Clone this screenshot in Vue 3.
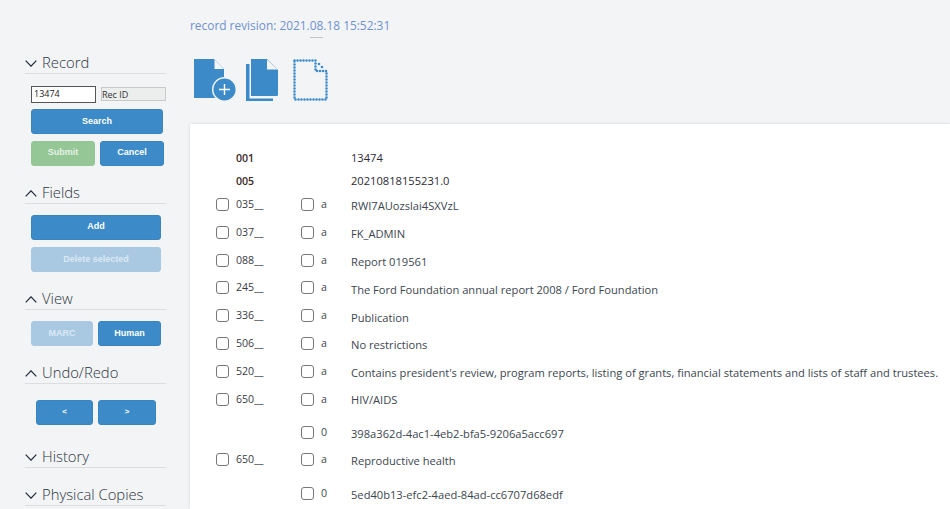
<script setup>
const rows = [
  { tag: '001', value: '13474', h: 23, plain: true },
  { tag: '005', value: '20210818155231.0', h: 25, plain: true },
  { tag: '035__', code: 'a', value: 'RWI7AUozslai4SXVzL', h: 28 },
  { tag: '037__', code: 'a', value: 'FK_ADMIN', h: 28 },
  { tag: '088__', code: 'a', value: 'Report 019561', h: 28 },
  { tag: '245__', code: 'a', value: 'The Ford Foundation annual report 2008 / Ford Foundation', h: 28, up: true },
  { tag: '336__', code: 'a', value: 'Publication', h: 27, up: true },
  { tag: '506__', code: 'a', value: 'No restrictions', h: 28 },
  { tag: '520__', code: 'a', value: "Contains president's review, program reports, listing of grants, financial statements and lists of staff and trustees.", h: 27 },
  { tag: '650__', code: 'a', value: 'HIV/AIDS', h: 34, down: true },
  { tag: '', code: '0', value: '398a362d-4ac1-4eb2-bfa5-9206a5acc697', h: 27 },
  { tag: '650__', code: 'a', value: 'Reproductive health', h: 34 },
  { tag: '', code: '0', value: '5ed40b13-efc2-4aed-84ad-cc6707d68edf', h: 28 },
];
</script>

<template>
  <div class="page">
    <aside class="side">
      <section class="sec sec-record">
        <h3 class="head"><svg class="chev" viewBox="0 0 12 7"><path d="M.7.7 6 6.2 11.3.7" /></svg>Record</h3>
        <div class="rec-row">
          <input class="rec-input" value="13474" />
          <span class="rec-label">Rec ID</span>
        </div>
        <button class="btn search">Search</button>
        <div class="pair">
          <button class="btn submit">Submit</button>
          <button class="btn cancel">Cancel</button>
        </div>
      </section>
      <section class="sec sec-fields">
        <h3 class="head"><svg class="chev" viewBox="0 0 12 7"><path d="M.7 6.3 6 .8l5.3 5.5" /></svg>Fields</h3>
        <button class="btn add">Add</button>
        <button class="btn add faded del">Delete selected</button>
      </section>
      <section class="sec sec-view">
        <h3 class="head"><svg class="chev" viewBox="0 0 12 7"><path d="M.7 6.3 6 .8l5.3 5.5" /></svg>View</h3>
        <div class="pair view-pair">
          <button class="btn faded marc">MARC</button>
          <button class="btn human">Human</button>
        </div>
      </section>
      <section class="sec sec-undo">
        <h3 class="head"><svg class="chev" viewBox="0 0 12 7"><path d="M.7 6.3 6 .8l5.3 5.5" /></svg>Undo/Redo</h3>
        <div class="pair undo-pair">
          <button class="btn arrow">&lt;</button>
          <button class="btn arrow">&gt;</button>
        </div>
      </section>
      <section class="sec sec-history">
        <h3 class="head"><svg class="chev" viewBox="0 0 12 7"><path d="M.7.7 6 6.2 11.3.7" /></svg>History</h3>
      </section>
      <section class="sec sec-copies">
        <h3 class="head"><svg class="chev" viewBox="0 0 12 7"><path d="M.7.7 6 6.2 11.3.7" /></svg>Physical Copies</h3>
      </section>
    </aside>

    <main class="main">
      <div class="revision">record revision: 2021.08.18 15:52:31</div>
      <div class="rule"></div>
      <div class="tools">
        <svg class="t-add" width="43" height="42" viewBox="0 0 43 42">
          <path d="M0 0h20l10 10v29H0z" fill="#3c8bc8" />
          <path d="M20.500 .500v9.500H30z" fill="#f3f4f6" />
          <circle cx="30.500" cy="30.500" r="11.800" fill="#3c8bc8" stroke="#f3f4f6" stroke-width="1.500" />
          <path d="M30.500 25v11M25 30.500h11" stroke="#fff" stroke-width="1.400" />
        </svg>
        <svg class="t-copy" width="33" height="42" viewBox="0 0 33 42">
          <path d="M5 0h16l11 11v24.500a1.500 1.500 0 0 1-1.500 1.500H5z" fill="#3c8bc8" />
          <path d="M21 .500v10h10.500z" fill="#f3f4f6" />
          <path d="M0 5h3.500v34.500H27V42H0z" fill="#3c8bc8" />
        </svg>
        <svg class="t-dots" width="35" height="42" viewBox="0 0 35 42">
          <path d="M1.500 1.500H22.500V12H33.500V40.500H1.500V1.500" fill="none" stroke="#3c8bc8" stroke-width="2.600" stroke-linecap="round" stroke-dasharray="0 3" />
          <circle cx="26" cy="5" r="1.300" fill="#3c8bc8" />
          <circle cx="29" cy="8" r="1.300" fill="#3c8bc8" />
        </svg>
      </div>
      <div class="card">
        <div v-for="(r, i) in rows" :key="i" class="row" :class="{ up: r.up, down: r.down }" :style="{ height: r.h + 'px' }">
          <span class="c1"><i v-if="r.tag && !r.plain" class="box"></i></span>
          <span class="c2" :class="{ plain: r.plain }">{{ r.tag }}</span>
          <span class="c3"><i v-if="r.code" class="box"></i></span>
          <span class="c4">{{ r.code }}</span>
          <span class="c5" :class="{ plainv: r.plain }">{{ r.value }}</span>
        </div>
      </div>
    </main>
  </div>
</template>

<style>
html, body { margin: 0; background: #f3f4f6; overflow: hidden; }
</style>

<style scoped>
.page { display: flex; width: 950px; height: 509px; overflow: hidden; background: #f3f4f6; }
.side { width: 190px; flex: none; padding-top: 53px; box-sizing: border-box; }
.sec { width: 141px; margin-left: 25px; }
.head {
  display: flex; align-items: center; height: 18px; padding-bottom: 2px; margin: 0;
  border-bottom: 1px solid #dcdddf;
  font: 300 14.800px "Open Sans", sans-serif; color: #2c3440;
}
.chev { width: 12px; height: 7px; margin-right: 5px; margin-top: 3px; fill: none; stroke: #1f2a3a; stroke-width: 1.200; flex: none; }
.btn {
  display: block; box-sizing: border-box; height: 25px; padding: 0 0 2px; border: 1px solid #3a85c0; border-radius: 3px;
  background: #3c8bc8; color: #fff; font: 700 9px "Liberation Sans", sans-serif; text-align: center;
}
.faded { background: #a9c9e3; border-color: #a9c9e3; color: #dbe8f3; }
.rec-row { display: flex; align-items: center; margin: 11px 0 0 6px; height: 18px; }
.rec-input {
  width: 65px; height: 17px; box-sizing: border-box; padding: 0 2px 1px; border: 1px solid #555; background: #fff;
  font: 9px "Open Sans", sans-serif; color: #222; outline: none;
}
.rec-label {
  width: 65px; height: 14px; margin-left: 5px; box-sizing: border-box; padding-left: 0; border: 1px solid #c9c9c9;
  background: #eceded; font: 9px/13px "Open Sans", sans-serif; color: #333;
}
.search { width: 132px; margin: 6px 0 0 6px; }
.pair { display: flex; }
.sec-record .pair { margin: 7px 0 0 6px; gap: 5px; }
.submit { width: 64px; background: #94c795; border-color: #94c795; color: #e6f2e6; padding-bottom: 3px; }
.cancel { width: 64px; padding-bottom: 3px; }
.sec-fields { margin-top: 17px; }
.add { width: 130px; margin: 11px 0 0 6px; padding-bottom: 4px; }
.del { margin-top: 7px; font-weight: 700; padding-bottom: 2px; }
.sec-view { margin-top: 17px; }
.view-pair { margin: 11px 0 0 6px; gap: 5px; }
.marc { width: 62px; }
.human { width: 63px; }
.sec-undo { margin-top: 17px; }
.undo-pair { margin: 16px 0 0 11px; gap: 5px; }
.arrow { width: 57px; font-size: 8px; }
.arrow + .arrow { width: 58px; }
.sec-history { margin-top: 22px; }
.sec-copies { margin-top: 17px; }

.main { flex: 1; min-width: 0; }
.revision { margin-top: 16px; height: 18px; font: 11.900px/18px "Open Sans", sans-serif; color: #6f92cf; }
.rule { width: 13px; height: 1px; margin: 3px 0 0 120px; background: #c4c6c9; }
.tools { display: flex; align-items: flex-start; margin: 21px 0 0 4px; }
.t-add { margin-right: 9px; }
.t-copy { margin-right: 14px; }
.card {
  box-sizing: border-box; height: 385px; margin-top: 23px; padding-top: 23px; background: #fff;
  box-shadow: 0 0 3px rgba(0, 0, 0, .12); overflow: hidden;
}
.row { display: flex; align-items: flex-start; font: 11.150px/22px "Open Sans", sans-serif; color: #3c4650; white-space: nowrap; }
.c1 { flex: none; padding-left: 26px; width: 20px; }
.c2 { width: 65px; flex: none; color: #3a3a44; line-height: 18px; font-size: 10.600px; }
.c2.plain { color: #3a2a28; font-weight: 600; line-height: 22px; }
.c3 { width: 20px; flex: none; }
.c4 { width: 30px; flex: none; line-height: 18px; font-size: 10.600px; }
.c5 { flex: none; }
.c5.plainv { color: #2e2a35; }
.box { display: block; width: 11px; height: 11px; margin-top: 3px; border: 1px solid #777; border-radius: 3px; background: #fff; }
.up .box { margin-top: 2px; }
.up .c2, .up .c4 { line-height: 16px; }
.down .box { margin-top: 4px; }
.down .c2, .down .c4 { line-height: 20px; }
</style>
